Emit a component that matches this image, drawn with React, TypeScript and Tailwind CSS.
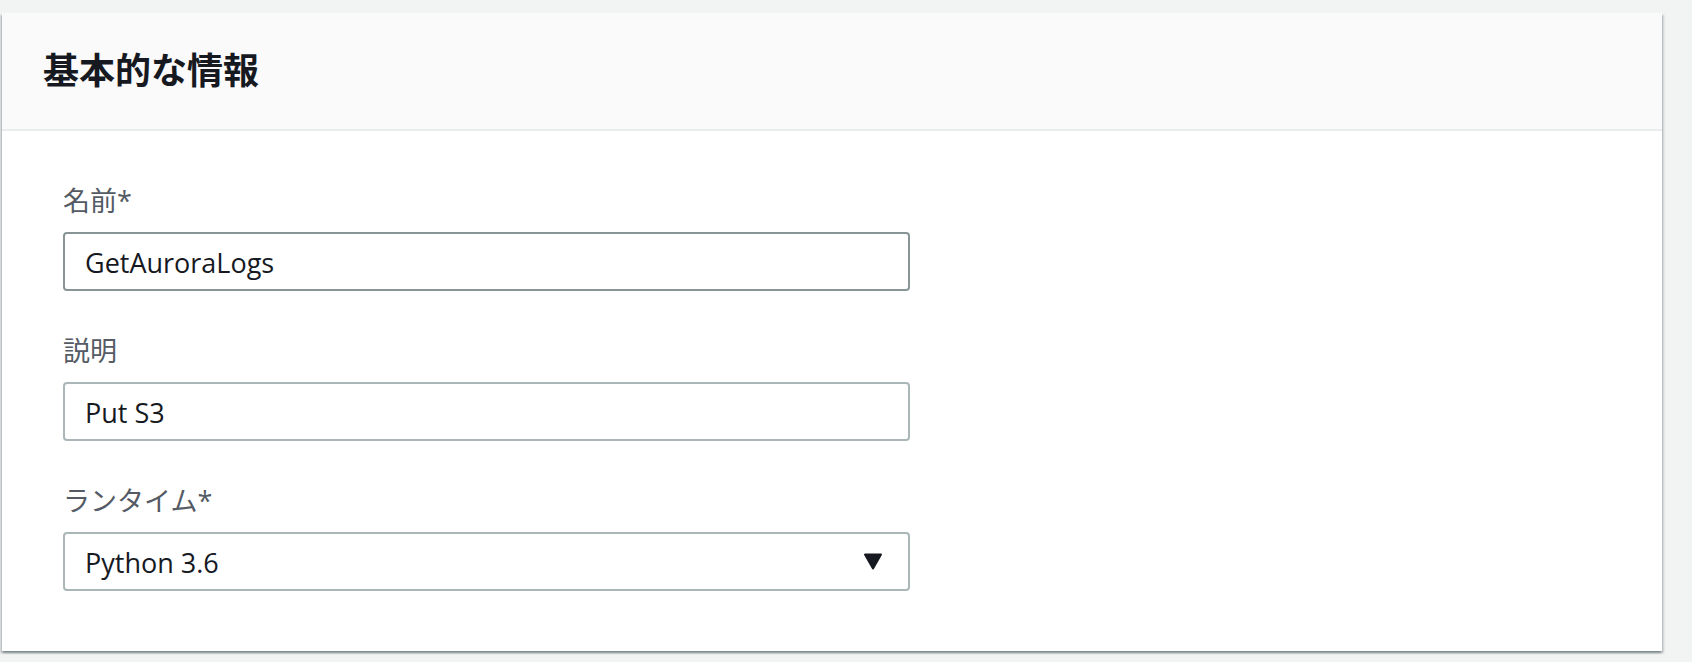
const FONT = "font-['Open_Sans','Noto_Sans_CJK_JP',sans-serif]";

const Field = ({
  label,
  children,
  className = "",
}: {
  label: string;
  children: React.ReactNode;
  className?: string;
}) => (
  <div className={className}>
    <label className="block text-[27px] leading-[39px] text-[#545b64]">{label}</label>
    <div className="mt-[12px]">{children}</div>
  </div>
);

const App = () => {
  return (
    <div className={`min-h-[662px] w-[1692px] bg-[#f2f3f3] pt-[13px] pl-[2px] ${FONT}`}>
      <section className="w-[1660px] bg-white shadow-[0_2px_2px_0_rgba(0,28,36,0.3),2px_2px_2px_0_rgba(0,28,36,0.15),-2px_2px_2px_0_rgba(0,28,36,0.15)]">
        {/* Header */}
        <div className="flex h-[118px] items-center border-b-2 border-[#eaeded] bg-[#fafafa] px-[41px]">
          <h2 className="text-[36px] font-bold leading-none text-[#16191f]">基本的な情報</h2>
        </div>
        {/* Body */}
        <div className="px-[61px] pb-[60px] pt-[50px]">
          <Field label="名前*">
            <div className="flex h-[59px] w-[847px] items-center rounded-[4px] border-2 border-[#879596] px-[20px] pt-[4px] text-[27px] font-medium text-[#16191f]">
              GetAuroraLogs
            </div>
          </Field>
          <Field label="説明" className="mt-[40px]">
            <div className="flex h-[59px] w-[847px] items-center rounded-[4px] border-2 border-[#aab7b8] px-[20px] pt-[4px] text-[27px] font-medium text-[#16191f]">
              Put S3
            </div>
          </Field>
          <Field label="ランタイム*" className="mt-[40px]">
            <div className="flex h-[59px] w-[847px] items-center justify-between rounded-[4px] border-2 border-[#aab7b8] pl-[20px] pr-[25px] text-[27px] font-medium text-[#16191f]">
              <span className="pt-[4px]">Python 3.6</span>
              <svg width="20" height="17" viewBox="0 0 20 17">
                <path
                  d="M2 1.5 H18 L10 15.5 Z"
                  fill="#16191f"
                  stroke="#16191f"
                  strokeWidth="2"
                  strokeLinejoin="round"
                />
              </svg>
            </div>
          </Field>
        </div>
      </section>
    </div>
  );
};

export default App;
